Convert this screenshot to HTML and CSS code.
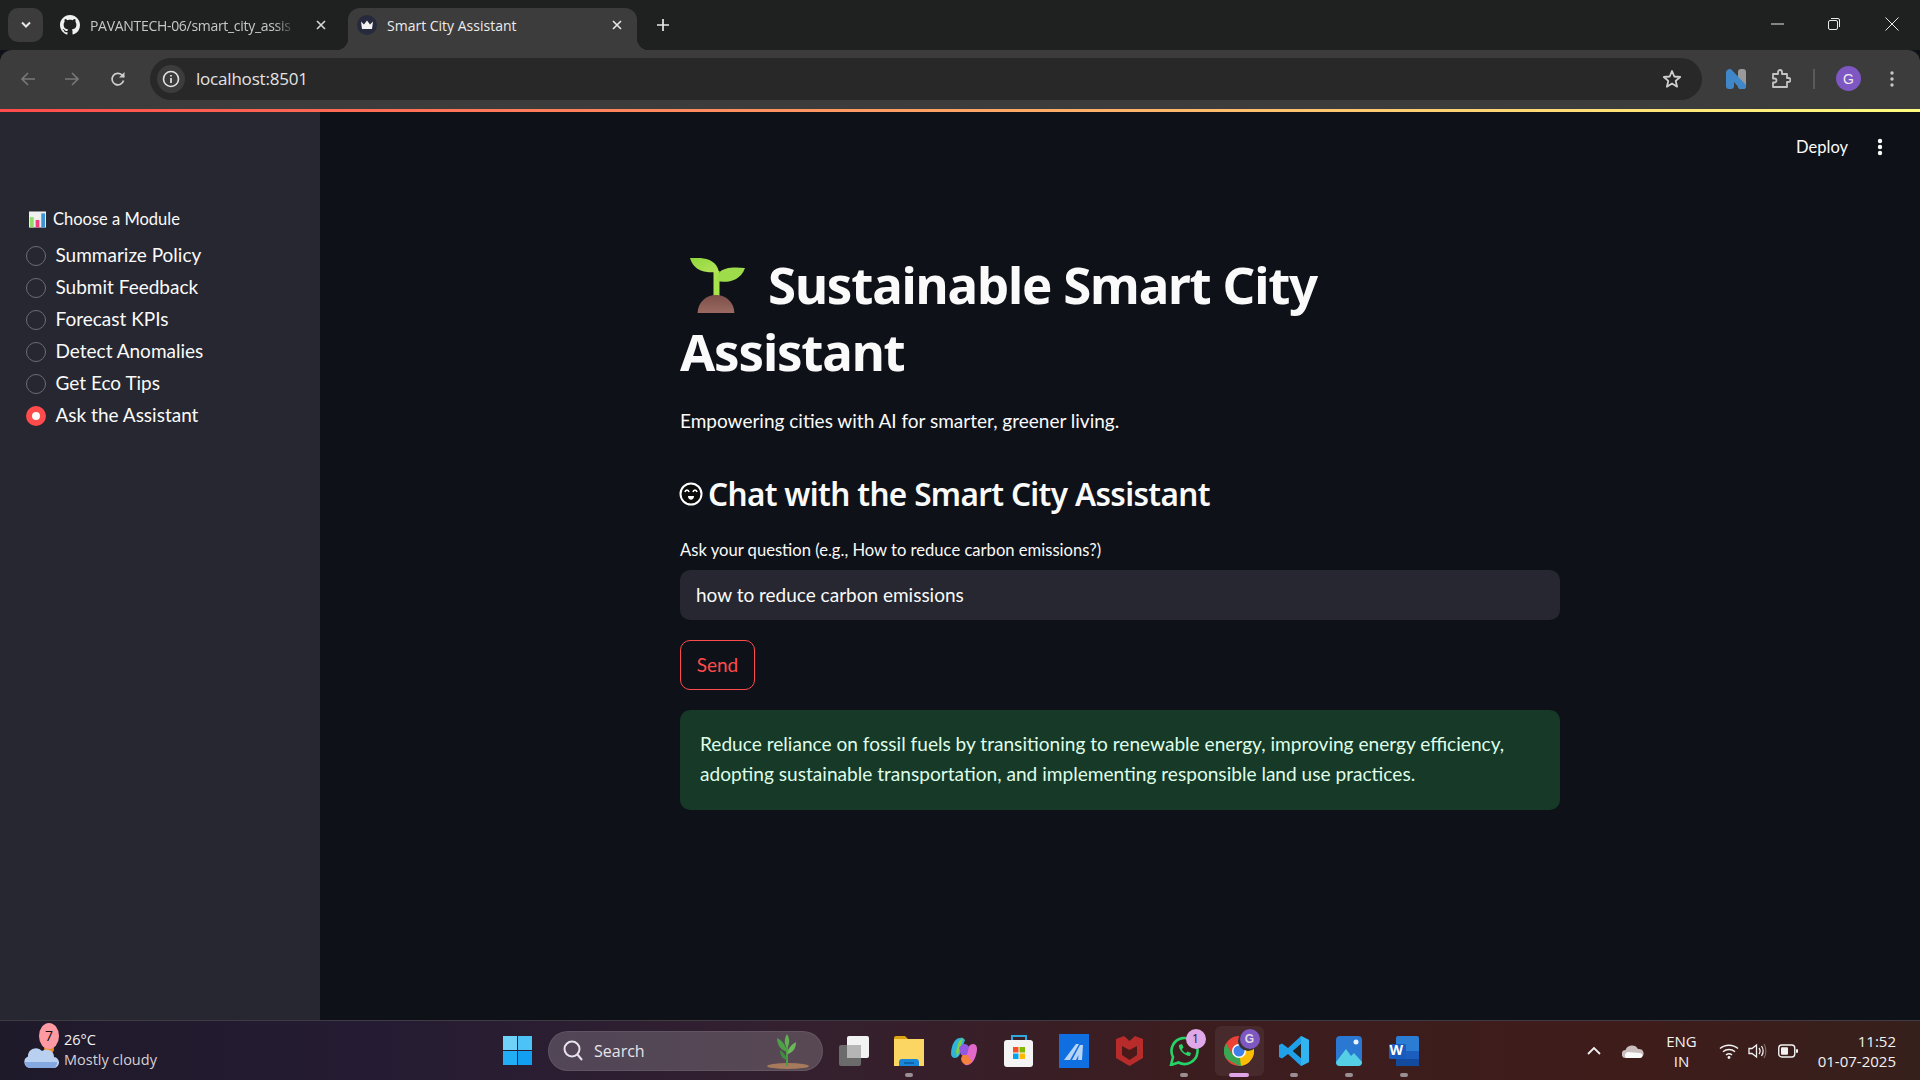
FILE: index.html
```html
<!DOCTYPE html>
<html lang="en">
<head>
<meta charset="utf-8">
<title>Smart City Assistant</title>
<link rel="stylesheet" href="styles.css">
</head>
<body>
<div class="screen">
  <header class="tabstrip">
    <div class="tab-search"><svg width="12" height="8" viewBox="0 0 12 8"><path d="M2 1.500 6 5.500 10 1.500" fill="none" stroke="#e8e8e8" stroke-width="2"/></svg></div>
    <div class="tab">
      <svg class="favicon" viewBox="0 0 16 16"><path fill="#f1f1f1" d="M8 0C3.58 0 0 3.58 0 8c0 3.54 2.29 6.53 5.47 7.59.4.07.55-.17.55-.38 0-.19-.01-.82-.01-1.49-2.01.37-2.53-.49-2.69-.94-.09-.23-.48-.94-.82-1.13-.28-.15-.68-.52-.01-.53.63-.01 1.08.58 1.23.82.72 1.21 1.87.87 2.33.66.07-.52.28-.87.51-1.07-1.78-.2-3.64-.89-3.64-3.95 0-.87.31-1.59.82-2.15-.08-.2-.36-1.02.08-2.12 0 0 .67-.21 2.2.82.64-.18 1.32-.27 2-.27.68 0 1.36.09 2 .27 1.53-1.04 2.2-.82 2.2-.82.44 1.1.16 1.92.08 2.12.51.56.82 1.27.82 2.15 0 3.07-1.87 3.75-3.65 3.95.29.25.54.73.54 1.48 0 1.07-.01 1.93-.01 2.2 0 .21.15.46.55.38A8.013 8.013 0 0016 8c0-4.42-3.58-8-8-8z"/></svg>
      <span class="tab-title tab-title-fade">PAVANTECH-06/smart_city_assis</span>
      <svg class="tab-close" viewBox="0 0 10 10"><path d="M1 1 9 9M9 1 1 9" stroke="#d8d8d8" stroke-width="1.600"/></svg>
    </div>
    <div class="tab tab-active">
      <svg class="favicon" viewBox="0 0 20 20"><circle cx="10" cy="10" r="10" fill="#262a3c"/><path d="M4 6.500 7 9.500 10 5.500 13 9.500 16 6.500 15 14H5Z" fill="#f3f3f3"/></svg>
      <span class="tab-title">Smart City Assistant</span>
      <svg class="tab-close" viewBox="0 0 10 10"><path d="M1 1 9 9M9 1 1 9" stroke="#e8e8e8" stroke-width="1.600"/></svg>
    </div>
    <svg class="new-tab" viewBox="0 0 14 14"><path d="M7 1V13M1 7H13" stroke="#e8e8e8" stroke-width="1.700"/></svg>
    <div class="window-controls">
      <svg viewBox="0 0 14 14"><path d="M0 7H13" stroke="#e8e8e8" stroke-width="1"/></svg>
      <svg viewBox="0 0 14 14"><rect x="1.500" y="3.500" width="9" height="9" rx="1.500" fill="none" stroke="#e8e8e8"/><path d="M4 1.500H11A1.500 1.500 0 0 1 12.500 3V10" fill="none" stroke="#e8e8e8"/></svg>
      <svg viewBox="0 0 14 14"><path d="M.5.500 13.500 13.500M13.500.500.5 13.500" stroke="#e8e8e8" stroke-width="1"/></svg>
    </div>
  </header>

  <nav class="toolbar">
    <svg class="nav-icon nav-back" viewBox="0 0 16 16"><path d="M15 8H2M8 2 2 8 8 14" fill="none" stroke="#777" stroke-width="1.700"/></svg>
    <svg class="nav-icon nav-fwd" viewBox="0 0 16 16"><path d="M1 8H14M8 2 14 8 8 14" fill="none" stroke="#777" stroke-width="1.700"/></svg>
    <svg class="nav-icon nav-reload" viewBox="0 0 16 16"><path d="M13.500 9.500A5.800 5.800 0 1 1 12 4L14 6" fill="none" stroke="#cfcfcf" stroke-width="1.700"/><path d="M14.500 1V6.500H9Z" fill="#cfcfcf"/></svg>
    <div class="omnibox">
      <span class="site-info"><svg width="18" height="18" viewBox="0 0 18 18"><circle cx="9" cy="9" r="7.500" fill="none" stroke="#e3e3e3" stroke-width="1.600"/><path d="M9 8V13M9 5V6.600" stroke="#e3e3e3" stroke-width="1.700"/></svg></span>
      <span class="url">localhost:8501</span>
      <svg class="star" viewBox="0 0 20 20"><path d="M10 2 12.300 7.500 18.200 8 13.700 11.900 15.100 17.700 10 14.600 4.900 17.700 6.300 11.900 1.800 8 7.700 7.500Z" fill="none" stroke="#d0d0d0" stroke-width="1.800" stroke-linejoin="round"/></svg>
    </div>
    <div class="toolbar-right">
      <svg class="ext-n" viewBox="0 0 20 20"><rect x="12" y="0" width="8" height="20" rx="3" fill="#9a9a9a"/><path d="M0 3.500A3.500 3.500 0 0 1 6.300 1.500L19.500 15.500A3 3 0 0 1 16.500 20H14L8 13V17A3 3 0 0 1 5 20H3A3 3 0 0 1 0 17Z" fill="#3f87c9"/></svg>
      <svg class="ext-puzzle" viewBox="0 0 20 20"><path d="M2 5H7V3A2 2 0 0 1 11 3V5H16V9H17.500A2 2 0 0 1 17.500 13H16V18H2V13.500H3.500A2 2 0 0 0 3.500 9.500H2Z" fill="none" stroke="#c4c4c4" stroke-width="1.800" stroke-linejoin="round"/></svg>
      <span class="toolbar-divider"></span>
      <span class="avatar">G</span>
      <svg class="kebab" viewBox="0 0 4 16"><circle cx="2" cy="2" r="1.700" fill="#c7c7c7"/><circle cx="2" cy="8" r="1.700" fill="#c7c7c7"/><circle cx="2" cy="14" r="1.700" fill="#c7c7c7"/></svg>
    </div>
  </nav>
  <div class="decoration"></div>

  <div class="app">
    <aside class="sidebar">
      <div class="widget-label">
        <svg class="chart-emoji" viewBox="0 0 18 17"><rect width="18" height="17" fill="#f0f0f0"/><rect x="1" y="6" width="4" height="11" fill="#8fdc6a"/><rect x="7" y="9" width="4" height="8" fill="#ef3f7f"/><rect x="13" y="2" width="4" height="15" fill="#3d93d8"/></svg>
        <span>Choose a Module</span>
      </div>
      <ul class="radios">
        <li class="radio"><span class="radio-dot"></span>Summarize Policy</li>
        <li class="radio"><span class="radio-dot"></span>Submit Feedback</li>
        <li class="radio"><span class="radio-dot"></span>Forecast KPIs</li>
        <li class="radio"><span class="radio-dot"></span>Detect Anomalies</li>
        <li class="radio"><span class="radio-dot"></span>Get Eco Tips</li>
        <li class="radio"><span class="radio-dot radio-dot-on"></span>Ask the Assistant</li>
      </ul>
    </aside>

    <main class="main">
      <div class="st-header">
        <span class="deploy">Deploy</span>
        <svg class="st-menu" viewBox="0 0 6 18"><circle cx="3" cy="3" r="2.200" fill="#fafafa"/><circle cx="3" cy="9" r="2.200" fill="#fafafa"/><circle cx="3" cy="15" r="2.200" fill="#fafafa"/></svg>
      </div>
      <div class="content">
        <h1 class="title"><svg class="seedling" viewBox="0 0 56 56"><defs><linearGradient id="leaf" x1="0" y1="0" x2="1" y2="1"><stop offset="0" stop-color="#8fd63c"/><stop offset="1" stop-color="#b4e35a"/></linearGradient><linearGradient id="soil" x1="0" y1="0" x2="0" y2="1"><stop offset="0" stop-color="#7d4f48"/><stop offset="1" stop-color="#9a6a62"/></linearGradient></defs><path d="M23.500 13H29.500V38H23.500Z" fill="#a9e34b"/><path d="M0 0C10-.5 26-1 29 14 20 14.500 5 16 0 0Z" fill="url(#leaf)"/><path d="M55 10C45 9 33 9 29 15L26 23C36 25 50 24 55 10Z" fill="#9fdc4c"/><path d="M7.600 55C8 44 16 37 26 37S44 44 44.400 55Z" fill="url(#soil)"/></svg>Sustainable Smart City Assistant</h1>
        <p class="tagline">Empowering cities with AI for smarter, greener living.</p>
        <h2 class="subtitle"><svg class="smile" viewBox="0 0 24 24"><circle cx="12" cy="12" r="10.500" fill="#0b0b0b" stroke="#fff" stroke-width="2"/><path d="M6 10C6.500 7.500 9.500 7.500 10 10M14 10C14.500 7.500 17.500 7.500 18 10" fill="none" stroke="#fff" stroke-width="1.600"/><path d="M9 14H15C15 19 9 19 9 14Z" fill="#fff"/></svg>Chat with the Smart City Assistant</h2>
        <label class="input-label">Ask your question (e.g., How to reduce carbon emissions?)</label>
        <div class="text-input">how to reduce carbon emissions</div>
        <button class="send">Send</button>
        <div class="success">Reduce reliance on fossil fuels by transitioning to renewable energy, improving energy efficiency, adopting sustainable transportation, and implementing responsible land use practices.</div>
      </div>
    </main>
  </div>

  <footer class="taskbar">
    <div class="tb-left">
      <div class="weather-icon">
        <svg width="36" height="28" viewBox="0 0 36 28"><circle cx="25" cy="8" r="5" fill="#f08a24"/><path d="M6 27A6 6 0 0 1 4 15.500 8 8 0 0 1 18 10 7.500 7.500 0 0 1 30 16 5.500 5.500 0 0 1 29 27Z" fill="#b9d0f0"/><path d="M6 27A6 6 0 0 1 1 21H33A5.500 5.500 0 0 1 29 27Z" fill="#86a8e0"/></svg>
        <span class="weather-badge">7</span>
      </div>
      <div class="weather-text"><span class="temp">26°C</span><span class="cond">Mostly cloudy</span></div>
    </div>
    <div class="tb-cell">
      <svg width="29" height="29" viewBox="0 0 29 29"><rect width="14" height="14" fill="#6fd2f8"/><rect x="15" width="14" height="14" fill="#4cc2f6"/><rect y="15" width="14" height="14" fill="#22aef5"/><rect x="15" y="15" width="14" height="14" fill="#129ff2"/></svg>
    </div>
    <div class="tb-search">
      <svg width="22" height="24" viewBox="0 0 22 24"><circle cx="10" cy="10" r="7.500" fill="none" stroke="#e6e3ea" stroke-width="2"/><path d="M15 15 20 21" stroke="#e6e3ea" stroke-width="2"/></svg>
      <span class="search-text">Search</span>
      <svg class="search-plant" width="46" height="38" viewBox="0 0 46 38"><ellipse cx="25" cy="34" rx="21" ry="3" fill="#a57b5c"/><path d="M24 34V6" stroke="#4c9a45" stroke-width="2"/><path d="M24 2C27 7 27 12 24 16 21 12 21 7 24 2Z" fill="#5faf52"/><path d="M14 6C20 9 23 14 24 20 18 18 14 13 14 6Z" fill="#4f9f48"/><path d="M33 10C28 13 25 16 24 22 30 21 33 16 33 10Z" fill="#69b85a"/><path d="M17 18C20 20 23 23 24 28 19 27 17 23 17 18Z" fill="#3f8c42"/></svg>
    </div>
    <div class="tb-apps">
      <div class="tb-cell"><svg width="30" height="30" viewBox="0 0 30 30"><rect y="9" width="22" height="21" rx="2" fill="#6b6b6b"/><rect x="8" width="22" height="22" rx="2" fill="#f2f2f2"/><rect x="8" y="9" width="14" height="13" fill="#b5b5b5"/></svg></div>
      <div class="tb-cell tb-open"><svg width="30" height="30" viewBox="0 0 30 30"><path d="M0 2A2 2 0 0 1 2 0H11L14 3H0Z" fill="#dca412"/><path d="M0 3H30V30H0Z" fill="#fcd663"/><path d="M5 30V26A3 3 0 0 1 8 23H22A3 3 0 0 1 25 26V30Z" fill="#1a86d8"/><path d="M10 27H20" stroke="#0c5a9e" stroke-width="1.500"/></svg></div>
      <div class="tb-cell"><svg width="28" height="30" viewBox="0 0 28 30"><path d="M13 2C8 1 4 4 2 11 0 18 1 22 5 22 8 22 10 19 11 15L15 4Z" fill="#2fb5d8"/><path d="M6 15 9 5 13 2 10 14 7 21Z" fill="#7fcf4a"/><path d="M15 29C20 30 24 26 26 19 28 12 27 8 23 8 20 8 18 11 17 15L13 26Z" fill="#e368c9"/><path d="M11 23C12 29 17 30 22 26L16 16 13 17Z" fill="#f5813f"/><path d="M9 12C12 7 17 7 19 11L17 19 11 19Z" fill="#9458e0"/></svg></div>
      <div class="tb-cell"><svg width="30" height="32" viewBox="0 0 30 32"><path d="M8 6V1H22V6" fill="none" stroke="#2fa8e0" stroke-width="2"/><rect y="5" width="29" height="27" rx="3" fill="#f4f4f4"/><rect x="9" y="12" width="5.500" height="5.500" fill="#f25022"/><rect x="15.500" y="12" width="5.500" height="5.500" fill="#7fba00"/><rect x="9" y="18.500" width="5.500" height="5.500" fill="#00a4ef"/><rect x="15.500" y="18.500" width="5.500" height="5.500" fill="#ffb900"/></svg></div>
      <div class="tb-cell"><svg width="30" height="34" viewBox="0 0 30 34"><rect width="30" height="34" fill="#0f6fe0"/><path d="M5 26 17 10H20L11 26ZM13 26 21 11H24L23 26H19L19.500 21 17 26Z" fill="#b8d4f5"/></svg></div>
      <div class="tb-cell"><svg width="27" height="30" viewBox="0 0 27 30"><path d="M0 3 8 0 13.500 5 19 0 27 3V22L13.500 30 0 22Z" fill="#b72b2a"/><path d="M6 10 13.500 14 21 10V19L13.500 24 6 19Z" fill="#4a1a1a"/></svg></div>
      <div class="tb-cell tb-open">
        <svg width="30" height="30" viewBox="0 0 30 30"><path d="M2 29 4 21A13 13 0 1 1 9.500 26.500Z" fill="none" stroke="#26d367" stroke-width="2.600"/><path d="M10 9C9 13 15 20 21 20L22 17 18.500 15.500 17 17C15 16.500 13.500 15 13 13L14.500 11.500 13 8Z" fill="#26d367"/></svg>
        <span class="app-badge">1</span>
      </div>
      <div class="tb-cell tb-open tb-active">
        <svg width="30" height="30" viewBox="0 0 30 30"><circle cx="15" cy="15" r="15" fill="#ea4335"/><path d="M15 30A15 15 0 0 0 28 7.500H15Z" fill="#fbbc05"/><path d="M2 7.500 8 18 15 30 2 22.500A15 15 0 0 1 2 7.500Z" fill="#34a853"/><path d="M15 30 8 18 15 15 17 30Z" fill="#34a853"/><circle cx="15" cy="15" r="7" fill="#fff"/><circle cx="15" cy="15" r="5.500" fill="#3f7fe8"/></svg>
        <span class="profile-badge">G</span>
      </div>
      <div class="tb-cell tb-open"><svg width="30" height="30" viewBox="0 0 30 30"><path d="M22 0 30 4V26L22 30 9 18 3 22.500 0 21V9L3 7.500 9 12ZM22 8 14 15 22 22Z" fill="#1fa0e8"/><path d="M22 0 30 4V26L22 30Z" fill="#32b4f0"/><path d="M22 8 14 15 22 22Z" fill="#26221f"/></svg></div>
      <div class="tb-cell tb-open"><svg width="26" height="30" viewBox="0 0 26 30"><rect width="26" height="30" rx="4" fill="#2a78d2"/><path d="M0 26 10 13 15 20 18 17 26 26V26A4 4 0 0 1 22 30H4A4 4 0 0 1 0 26Z" fill="#55cfe6"/><circle cx="20" cy="6" r="2.500" fill="#e8f4ff"/></svg></div>
      <div class="tb-cell tb-open"><svg width="30" height="30" viewBox="0 0 30 30"><rect x="7" width="23" height="30" rx="2" fill="#2b7cd3"/><rect x="7" y="15" width="23" height="15" fill="#1b5ebe"/><rect x="7" y="23" width="23" height="7" fill="#124a9e"/><rect y="8" width="17" height="15" rx="1.500" fill="#185abd"/></svg><span class="word-w">W</span></div>
    </div>
    <div class="tb-tray">
      <svg class="tray-caret" width="16" height="10" viewBox="0 0 16 10"><path d="M2 8 8 2 14 8" fill="none" stroke="#f0f0f0" stroke-width="1.800"/></svg>
      <svg class="tray-cloud" width="22" height="14" viewBox="0 0 22 14"><path d="M4 14A4 4 0 0 1 3.500 6 7 7 0 0 1 16 5 4.500 4.500 0 0 1 18 14Z" fill="#c9bdbd"/><path d="M4 14A3.500 3.500 0 0 1 6 8L18 9A2.500 2.500 0 0 1 18 14Z" fill="#fafafa"/></svg>
      <div class="lang"><span>ENG</span><span>IN</span></div>
      <svg class="tray-wifi" width="20" height="16" viewBox="0 0 20 16"><path d="M1 5.500C6 1 14 1 19 5.500M4 8.800C7.500 5.800 12.500 5.800 16 8.800M7 12C8.800 10.500 11.200 10.500 13 12" fill="none" stroke="#f2f2f2" stroke-width="1.500"/><circle cx="10" cy="14.500" r="1.400" fill="#f2f2f2"/></svg>
      <svg class="tray-sound" width="20" height="16" viewBox="0 0 20 16"><path d="M1 5.500H4L8.500 2V14L4 10.500H1Z" fill="none" stroke="#f2f2f2" stroke-width="1.300"/><path d="M11 5C12.300 6.800 12.300 9.200 11 11M13.500 3C15.500 6 15.500 10 13.500 13" fill="none" stroke="#f2f2f2" stroke-width="1.300"/><path d="M16 1C18.500 5 18.500 11 16 15" fill="none" stroke="#7a6a66" stroke-width="1.200"/></svg>
      <svg class="tray-batt" width="20" height="14" viewBox="0 0 20 14"><rect x=".75" y="1" width="16" height="12" rx="3" fill="none" stroke="#f2f2f2" stroke-width="1.400"/><rect x="3" y="3.300" width="7" height="7.400" rx="1" fill="#f2f2f2"/><rect x="18" y="5" width="2" height="4" rx="1" fill="#f2f2f2"/></svg>
      <div class="clock"><span>11:52</span><span>01-07-2025</span></div>
    </div>
  </footer>
</div>
</body>
</html>
```

FILE: styles.css
```css
* { box-sizing: border-box; }
html, body { margin: 0; padding: 0; height: 100%; background: #0e1117; overflow: hidden; }
body { font-family: "Lato", "Noto Sans", sans-serif; color: #fafafa; }
.screen { width: 1920px; height: 1080px; display: flex; flex-direction: column; }

/* Tab strip */
.tabstrip { height: 50px; flex: none; background: #1f2120; display: flex; align-items: flex-end; padding-left: 8px; font-family: "Open Sans", sans-serif; }
.tab-search { width: 35px; height: 34px; align-self: flex-start; margin-top: 8px; border-radius: 10px; background: #3c3c3c; display: flex; align-items: center; justify-content: center; }
.tab { height: 42px; margin-left: 9px; padding: 0 9px 8px; display: flex; align-items: center; gap: 10px; color: #c7c7c7; font-size: 14px; position: relative; }
.tab:nth-child(2) { width: 296px; padding-left: 8px; }
.tab-active { margin-left: 0; width: 289px; color: #ececec; background: #3c3c3c; border-radius: 12px 12px 0 0; }
.tab-active::before, .tab-active::after { content: ""; position: absolute; bottom: 0; width: 12px; height: 12px; }
.tab-active::before { left: -12px; background: radial-gradient(circle at 0 0, transparent 12px, #3c3c3c 12.500px); }
.tab-active::after { right: -12px; background: radial-gradient(circle at 100% 0, transparent 12px, #3c3c3c 12.500px); }
.favicon { width: 20px; height: 20px; flex: none; }
.tab-title { flex: 1; white-space: nowrap; }
.tab-title-fade { letter-spacing: -.3px; -webkit-mask-image: linear-gradient(90deg, #000 88%, transparent 98%); mask-image: linear-gradient(90deg, #000 88%, transparent 98%); }
.tab-close { width: 10px; height: 10px; flex: none; margin: 0 6px; }
.tab:nth-child(2) .tab-close { margin-right: 13px; }
.new-tab { width: 14px; height: 14px; margin: 0 0 18px 19px; }
.window-controls { margin-left: auto; align-self: flex-start; margin-top: 17px; display: flex; padding-right: 21px; }
.window-controls svg { width: 14px; height: 14px; display: block; margin-left: 42px; }
.window-controls svg:last-child { margin-left: 44px; }

/* Toolbar */
.toolbar { height: 59px; flex: none; background: #3c3c3c; border-radius: 12px 12px 0 0; display: flex; align-items: center; padding: 0 8px 2px 20px; }
.nav-icon { width: 16px; height: 16px; flex: none; }
.nav-fwd { margin-left: 28px; }
.nav-reload { margin-left: 30px; }
.omnibox { width: 1552px; height: 42px; margin-left: 24px; border-radius: 21px; background: #282828; display: flex; align-items: center; padding-left: 7px; }
.site-info { width: 28px; height: 28px; border-radius: 50%; background: #3c3c3c; display: flex; align-items: center; justify-content: center; }
.url { margin-left: 11px; font-family: "Open Sans", sans-serif; font-size: 17px; letter-spacing: -.2px; color: #e3e3e3; }
.star { width: 20px; height: 20px; margin-left: auto; margin-right: 20px; }
.toolbar-right { flex: 1; display: flex; align-items: center; }
.ext-n { width: 20px; height: 20px; margin-left: 24px; }
.ext-puzzle { width: 20px; height: 20px; margin-left: 25px; }
.toolbar-divider { width: 2px; height: 20px; margin-left: 22px; background: #5a5a5a; }
.avatar { width: 25px; height: 25px; margin-left: 21px; border-radius: 50%; background: #7e57c2; display: flex; align-items: center; justify-content: center; font: 14px "Liberation Sans", sans-serif; color: #eee; }
.kebab { width: 4px; height: 16px; margin-left: 29px; }
.decoration { height: 3px; flex: none; background: linear-gradient(90deg, #ff4b4b, #fffd80); }

/* App */
.app { flex: 1; display: flex; min-height: 0; }
.sidebar { width: 320px; flex: none; background: #262730; padding: 96px 26px 0; }
.widget-label { display: flex; align-items: center; gap: 7px; height: 22px; font-size: 16.500px; padding-left: 3px; }
.chart-emoji { width: 17px; height: 17px; }
.radios { list-style: none; margin: 10px 0 0; padding: 0; }
.radio { height: 32px; display: flex; align-items: flex-start; gap: 9.500px; font-size: 19px; line-height: 30px; white-space: nowrap; }
.radio-dot { width: 20px; height: 20px; margin-top: 6px; border-radius: 50%; border: 1.500px solid #6b6c75; flex: none; }
.radio-dot-on { border: 6.500px solid #ff4b4b; background: #fafafa; }

.main { flex: 1; min-width: 0; position: relative; }
.st-header { position: absolute; top: 0; right: 0; height: 70px; display: flex; align-items: center; padding-right: 37px; gap: 29px; }
.deploy { font-size: 16.500px; }
.st-menu { width: 6px; height: 18px; }
.content { width: 880px; margin: 0 auto; padding-top: 139px; }
.title { margin: 0; max-width: 700px; font-family: "Noto Sans", sans-serif; font-size: 51px; line-height: 67px; font-weight: 700; letter-spacing: -1.200px; }
.seedling { width: 56px; height: 56px; margin: 0 22px 0 10px; vertical-align: -10px; }
.tagline { margin: 20px 0 0; font-size: 19px; line-height: 32px; }
.subtitle { margin: 35px 0 0; font-family: "Noto Sans", sans-serif; font-size: 31.500px; line-height: 44px; font-weight: 600; letter-spacing: -.65px; display: flex; align-items: center; gap: 5px; }
.smile { width: 24px; height: 24px; margin-left: -1px; }
.input-label { display: block; margin-top: 22px; font-size: 16.600px; line-height: 24px; }
.text-input { height: 50px; margin-top: 8px; padding: 0 16px 2px; border-radius: 10px; background: #262730; display: flex; align-items: center; font-size: 19px; }
.send { display: block; width: 75px; height: 50px; margin-top: 20px; padding: 0 0 2px; border: 1px solid #ff4b4b; border-radius: 10px; background: #0e1117; color: #ff4b4b; font: inherit; font-size: 19px; }
.success { margin-top: 20px; height: 100px; padding: 19px 20px; border-radius: 10px; background: #173928; color: #dffde9; font-size: 19.100px; line-height: 30px; }

/* Taskbar */
.taskbar { height: 60px; flex: none; border-top: 1px solid #3f3b42; display: flex; align-items: center; font-family: "Open Sans", sans-serif; color: #f2f2f2; background: linear-gradient(90deg, #1f1a2a 0%, #251c33 20%, #34202f 42%, #3c1d1f 62%, #3e1c1a 85%, #36201c 100%); }
.tb-left { width: 490px; flex: none; display: flex; align-items: center; padding-left: 24px; height: 100%; }
.weather-icon { width: 40px; height: 36px; position: relative; padding-top: 8px; }
.weather-badge { position: absolute; left: 15px; top: -10px; width: 20px; height: 26px; border-radius: 50%; background: #ff9aa2; color: #111; font-size: 14px; display: flex; align-items: center; justify-content: center; }
.weather-text { display: flex; flex-direction: column; font-size: 14.500px; line-height: 20px; margin-top: -2px; }
.cond { color: #d5d0d6; }
.tb-cell { width: 55px; height: 50px; flex: none; display: flex; align-items: center; justify-content: center; position: relative; }
.tb-search { width: 275px; height: 40px; margin: 0 3.500px 0 3px; border-radius: 20px; background: rgba(255,255,255,.18); border: 1px solid rgba(255,255,255,.08); display: flex; align-items: center; padding-left: 13px; position: relative; flex: none; }
.search-text { margin-left: 10px; font-size: 16px; color: #e6e3ea; }
.search-plant { position: absolute; right: 13px; bottom: 0; }
.tb-apps { display: flex; flex: none; position: relative; }
.tb-open::after { content: ""; position: absolute; bottom: -1px; left: 50%; width: 8px; height: 4px; margin-left: -4px; border-radius: 2px; background: #9a8f92; }
.tb-active { background: rgba(255,255,255,.06); border-radius: 6px; width: 49px; margin: 0 3px; }
.tb-active::after { width: 20px; margin-left: -10px; background: #e0a4e8; }
.app-badge, .profile-badge { position: absolute; width: 20px; height: 20px; border-radius: 50%; top: 3px; right: 3px; display: flex; align-items: center; justify-content: center; font-size: 12px; }
.app-badge { background: #e0a8e8; color: #222; right: 6px; }
.profile-badge { background: #7e57c2; color: #ddd; font-family: "Liberation Sans", sans-serif; font-weight: 700; right: 4px; box-shadow: -2px 2px 0 #333; }
.word-w { position: absolute; left: 13px; top: 14px; font: 700 14px "Open Sans", sans-serif; color: #fff; }
.tb-tray { flex: 1; display: flex; align-items: center; }
.tray-caret { margin-left: 154px; }
.tray-cloud { margin-left: 20px; }
.lang { width: 40px; margin-left: 18px; display: flex; flex-direction: column; align-items: center; font-size: 15px; line-height: 20px; }
.tray-wifi { margin-left: 17px; }
.tray-sound { margin-left: 9px; }
.tray-batt { margin-left: 10px; }
.clock { margin-left: auto; padding-right: 24px; display: flex; flex-direction: column; align-items: flex-end; font-size: 15px; line-height: 20px; }
```
